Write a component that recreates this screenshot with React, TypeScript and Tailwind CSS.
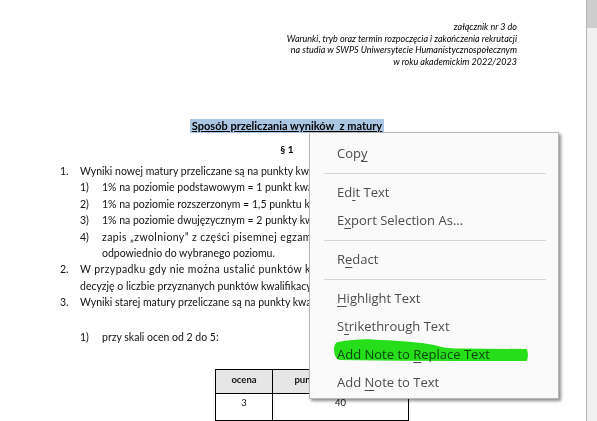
import React from 'react';

const docFont = "font-['Lato','Liberation_Sans',sans-serif]";

const Item = ({ n, indent, children }: { n?: string; indent: 'top' | 'sub' | 'topText' | 'subText'; children: React.ReactNode }) => {
  if (indent === 'top') {
    return (
      <div className="flex whitespace-nowrap pl-[60px]">
        <span className="w-[20px] shrink-0">{n}</span>
        <span>{children}</span>
      </div>
    );
  }
  if (indent === 'sub') {
    return (
      <div className="flex whitespace-nowrap pl-[80px]">
        <span className="w-[22px] shrink-0">{n}</span>
        <span>{children}</span>
      </div>
    );
  }
  return (
    <div className={`whitespace-nowrap ${indent === 'topText' ? 'pl-[80px]' : 'pl-[102px]'}`}>{children}</div>
  );
};

const MenuItem = ({ pre, u, post }: { pre: string; u: string; post: string }) => (
  <div className="flex h-[28px] items-center whitespace-pre pl-[27px]">
    {pre}
    <span className="underline decoration-[1px] underline-offset-[3px]">{u}</span>
    {post}
  </div>
);

const Sep = () => (
  <div className="flex h-[11px] items-center pl-[14px] pr-[12px]">
    <div className="h-px w-full bg-[#d6d6d6]" />
  </div>
);

export default function App() {
  return (
    <div className="relative flex h-[421px] w-[597px] overflow-hidden bg-white">
      <div className={`h-full w-[586px] shrink-0 overflow-hidden text-black ${docFont}`}>
        {/* naglowek zalacznika */}
        <div className="pt-[21px] pr-[69px] text-right text-[9px] italic leading-[11.5px] text-black">
          <div>załącznik nr 3 do</div>
          <div>Warunki, tryb oraz termin rozpoczęcia i zakończenia rekrutacji</div>
          <div>na studia w SWPS Uniwersytecie Humanistycznospołecznym</div>
          <div>w roku akademickim 2022/2023</div>
        </div>

        <div className="mt-[52px] flex justify-center pr-[12px]">
          <span className="whitespace-pre bg-[#abc6e3] px-[2px] text-[11px] leading-[14px] font-bold underline">
            Sposób przeliczania wyników  z matury
          </span>
        </div>
        <div className="mt-[9px] flex justify-center pr-[12px] text-[10px] leading-[14px] font-bold">§ 1</div>

        <div className="mt-[7px] text-[10.5px] leading-[16.4px] text-[#111]">
          <Item n="1." indent="top">Wyniki nowej matury przeliczane są na punkty kwalifikacyjne w następujący sposób:</Item>
          <Item n="1)" indent="sub">1% na poziomie podstawowym = 1 punkt kwalifikacyjny,</Item>
          <Item n="2)" indent="sub">1% na poziomie rozszerzonym = 1,5 punktu kwalifikacyjnego,</Item>
          <Item n="3)" indent="sub">1% na poziomie dwujęzycznym = 2 punkty kwalifikacyjne,</Item>
          <Item n="4)" indent="sub">
            <span className="tracking-[0.4px]">zapis „zwolniony” z części pisemnej egzaminu maturalnego jest przeliczany</span>
          </Item>
          <Item indent="subText">odpowiednio do wybranego poziomu.</Item>
          <Item n="2." indent="top">
            <span className="tracking-[0.4px]">W przypadku gdy nie można ustalić punktów kwalifikacyjnych kandydata</span>
          </Item>
          <Item indent="topText">decyzję o liczbie przyznanych punktów kwalifikacyjnych podejmuje komisja.</Item>
          <Item n="3." indent="top">Wyniki starej matury przeliczane są na punkty kwalifikacyjne w następujący sposób:</Item>
          <div className="mt-[18.6px]">
            <Item n="1)" indent="sub">przy skali ocen od 2 do 5:</Item>
          </div>
        </div>

        <table className="mt-[23px] ml-[215px] border-collapse text-[9.5px] text-[#111]">
          <tbody>
            <tr className="h-[24px] bg-[#e7e6e6]">
              <td className="w-[57px] border border-black pb-[2px] text-center font-bold">ocena</td>
              <td className="w-[136px] border border-black pb-[2px] text-center font-bold">punkty kwalifikacyjne</td>
            </tr>
            <tr className="h-[27px]">
              <td className="border border-black pt-[2px] text-center align-top">3</td>
              <td className="border border-black pt-[2px] text-center align-top">40</td>
            </tr>
            <tr className="h-[27px]">
              <td className="border border-black" />
              <td className="border border-black" />
            </tr>
          </tbody>
        </table>
      </div>

      <div className="h-full w-px shrink-0 bg-[#b4b4b4]" />
      <div className="h-full w-[10px] shrink-0 bg-[#f0f0f0]">
        <div className="h-[28px] bg-[#cdcdcd]" />
      </div>

      {/* menu kontekstowe */}
      <div className="absolute left-[309px] top-[132px] w-[250px] border border-[#b8b8b8] bg-[#fafafa] pt-[7px] pb-[1px] font-['Open_Sans',sans-serif] text-[13px] text-[#4d4d4d] shadow-[2px_2px_3px_rgba(0,0,0,0.45)]">
        <MenuItem pre="Cop" u="y" post="" />
        <Sep />
        <MenuItem pre="Ed" u="i" post="t Text" />
        <MenuItem pre="E" u="x" post="port Selection As..." />
        <Sep />
        <MenuItem pre="R" u="e" post="dact" />
        <Sep />
        <MenuItem pre="" u="H" post="ighlight Text" />
        <MenuItem pre="S" u="t" post="rikethrough Text" />
        <MenuItem pre="Add Note to " u="R" post="eplace Text" />
        <MenuItem pre="Add " u="N" post="ote to Text" />
      </div>

      {/* zielony zakreslacz */}
      <svg className="pointer-events-none absolute left-0 top-0 mix-blend-multiply" width="597" height="421">
        <path
          d="M338 342 C350 340 362 339 372 339.5 C395 340.5 420 342 434 345 C442 347.5 448 348.5 460 348.5 L526 349 C528.5 349 528.5 361 526 361 L460 361 C420 361 380 360.5 340 360 C333 359.5 332 343 338 342 Z"
          fill="#26e41a"
        />
      </svg>
    </div>
  );
}
